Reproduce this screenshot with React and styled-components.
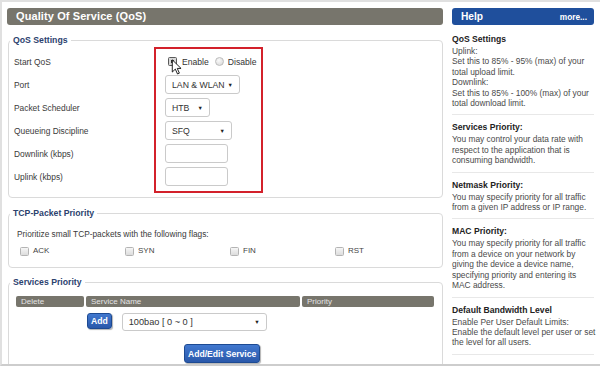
import React from 'react'
import styled, { createGlobalStyle } from 'styled-components'

const GlobalStyle = createGlobalStyle`
  html, body { margin: 0; padding: 0; background: #fff; }
  body { font-family: "Liberation Sans", Arial, sans-serif; }
`

const Page = styled.div`
  box-sizing: border-box;
  width: 600px;
  height: 366px;
  overflow: hidden;
  border: 2px solid #e0e0e0;
  border-right: none;
  border-bottom-color: #cdcdcd;
  padding: 6px 0 0 5px;
  display: grid;
  grid-template-columns: 436px 142px;
  column-gap: 9px;
  align-items: start;
`

const Main = styled.div`
  display: flex;
  flex-direction: column;
`

const TitleBar = styled.div`
  height: 17px;
  border-radius: 3px;
  background: #77756c;
  color: #fff;
  font-weight: bold;
  font-size: 11px;
  line-height: 17px;
  padding-left: 9px;
  letter-spacing: 0.1px;
`

const Fieldset = styled.fieldset`
  margin: ${p => p.$top}px 0 0 1px;
  padding: 0;
  border: 1px solid #dadada;
  border-radius: 4px;
  min-width: 0;
`

const Legend = styled.legend`
  font-size: 8.7px;
  font-weight: bold;
  color: #2c426e;
  line-height: 11px;
  padding: 0 3px;
  margin-left: 1px;
`

const QosBody = styled.div`
  display: flex;
  padding: 1px 0 4px 5px;
`

const LabelCol = styled.div`
  width: 140px;
  padding-top: 3px;
`

const Row = styled.div`
  position: relative;
  display: flex;
  align-items: center;
  height: 23px;
`

const Label = styled.span`
  font-size: 8.4px;
  color: #3a3a3a;
`

const ControlBox = styled.div`
  box-sizing: content-box;
  width: 96px;
  border: 2px solid #d3212b;
  padding: 1px 0 3px 9px;
`

const Check = styled.span`
  box-sizing: border-box;
  display: inline-block;
  flex: none;
  width: 9px;
  height: 9px;
  border: 1px solid ${p => (p.$active ? '#5a5a5a' : '#b4b4b4')};
  border-radius: 1.5px;
  background: ${p => (p.$active ? '#d8d8d8' : 'linear-gradient(#f6f6f6, #dcdcdc)')};
  position: relative;

  &::after {
    content: '';
    display: ${p => (p.$active ? 'block' : 'none')};
    position: absolute;
    left: 2px;
    top: 2px;
    width: 3px;
    height: 3px;
    background: #333;
  }
`

const Radio = styled.span`
  box-sizing: border-box;
  display: inline-block;
  flex: none;
  width: 9px;
  height: 9px;
  border: 1px solid #bdbdbd;
  border-radius: 50%;
  background: radial-gradient(circle at 40% 35%, #fafafa, #d4d4d4);
`

const OptText = styled.span`
  font-size: 8.6px;
  color: #333;
  margin-left: ${p => p.$gap || 0}px;
`

const SelectBox = styled.div`
  box-sizing: border-box;
  width: ${p => p.$w}px;
  height: ${p => p.$h || 19}px;
  border: 1px solid #cacaca;
  border-radius: 3px;
  background: #fff;
  display: flex;
  align-items: center;
  justify-content: space-between;
  padding: 0 6px 0 6px;
  font-size: ${p => p.$fs || 8.7}px;
  color: #333;
  white-space: nowrap;

  &::after {
    content: '▼';
    font-size: 5.5px;
    color: #222;
  }
`

const TextInput = styled.div`
  box-sizing: border-box;
  width: 63px;
  height: 19px;
  border: 1px solid #cacaca;
  border-radius: 3px;
  background: #fff;
`

const Cursor = styled.svg`
  position: absolute;
  left: 6px;
  top: 9px;
  width: 11px;
  height: 16px;
`

const TcpBody = styled.div`
  padding: 9px 8px 10px 8px;
  font-size: 8.3px;
  color: #3a3a3a;
  line-height: 12px;
`

const FlagGrid = styled.div`
  display: grid;
  grid-template-columns: repeat(4, 105px);
  margin-top: 5px;
  padding-left: 3px;
`

const Flag = styled.label`
  display: flex;
  align-items: center;
  gap: 4px;
  font-size: 8px;
  color: #444;
`

const ServicesBody = styled.div`
  padding: 8px 0 20px 7px;
`

const TableHead = styled.div`
  display: grid;
  grid-template-columns: 68px 214px 132px;
  column-gap: 2px;
`

const HeadCell = styled.div`
  height: 11px;
  background: #77756c;
  border-radius: 2px;
  color: #e4e4e4;
  font-size: 8px;
  line-height: 11px;
  padding-left: 5px;
`

const AddRow = styled.div`
  display: flex;
  align-items: flex-start;
  gap: 10px;
  margin-top: 6px;
  padding-left: 71px;
`

const BlueButton = styled.div`
  box-sizing: border-box;
  height: ${p => p.$h}px;
  padding: 0 ${p => p.$px}px;
  border: 1px solid #1d4a92;
  border-radius: 3px;
  background: linear-gradient(#4178cf, #2a58aa);
  box-shadow: 1px 1px 1px rgba(0, 0, 0, 0.3);
  color: #fff;
  font-weight: bold;
  font-size: 8.6px;
  display: flex;
  align-items: center;
  white-space: nowrap;
`

const EditRow = styled.div`
  margin-top: 13px;
  padding-left: 168px;
  display: flex;
`

const Help = styled.div`
  display: flex;
  flex-direction: column;
`

const HelpBar = styled.div`
  height: 17px;
  border-radius: 3px;
  background: #1f4f9c;
  color: #fff;
  font-weight: bold;
  display: flex;
  align-items: center;
  justify-content: space-between;
  padding: 0 7px 0 9px;
`

const HelpTitle = styled.span`
  font-size: 10.2px;
`

const More = styled.span`
  font-size: 8.3px;
`

const HelpSection = styled.div`
  padding: ${p => (p.$first ? 8 : 6)}px 0 6px;
  border-bottom: 1px solid #e8e8e8;
`

const HelpHeading = styled.div`
  font-size: 8.6px;
  font-weight: bold;
  color: #222;
  line-height: 12px;
  margin-bottom: 1px;
`

const HelpLine = styled.div`
  font-size: 8.4px;
  color: #4a4a4a;
  line-height: 10.4px;
  white-space: nowrap;
`

const helpItems = [
  {
    title: 'QoS Settings',
    lines: [
      'Uplink:',
      'Set this to 85% - 95% (max) of your',
      'total upload limit.',
      'Downlink:',
      'Set this to 85% - 100% (max) of your',
      'total download limit.',
    ],
  },
  {
    title: 'Services Priority:',
    lines: [
      'You may control your data rate with',
      'respect to the application that is',
      'consuming bandwidth.',
    ],
  },
  {
    title: 'Netmask Priority:',
    lines: [
      'You may specify priority for all traffic',
      'from a given IP address or IP range.',
    ],
  },
  {
    title: 'MAC Priority:',
    lines: [
      'You may specify priority for all traffic',
      'from a device on your network by',
      'giving the device a device name,',
      'specifying priority and entering its',
      'MAC address.',
    ],
  },
  {
    title: 'Default Bandwidth Level',
    lines: [
      'Enable Per User Default Limits:',
      'Enable the default level per user or set',
      'the level for all users.',
    ],
  },
]

const labels = [
  'Start QoS',
  'Port',
  'Packet Scheduler',
  'Queueing Discipline',
  'Downlink (kbps)',
  'Uplink (kbps)',
]

const flags = ['ACK', 'SYN', 'FIN', 'RST']

export default function App() {
  return (
    <>
      <GlobalStyle />
      <Page>
        <Main>
          <TitleBar>Quality Of Service (QoS)</TitleBar>

          <Fieldset $top={10}>
            <Legend>QoS Settings</Legend>
            <QosBody>
              <LabelCol>
                {labels.map(l => (
                  <Row key={l}>
                    <Label>{l}</Label>
                  </Row>
                ))}
              </LabelCol>
              <ControlBox>
                <Row>
                  <Check $active style={{ marginLeft: 3 }} />
                  <OptText $gap={5}>Enable</OptText>
                  <Radio style={{ marginLeft: 6 }} />
                  <OptText $gap={4}>Disable</OptText>
                  <Cursor viewBox="0 0 12 19">
                    <path
                      d="M1 1 L1 15.5 L4.6 12 L7.2 17.8 L9.4 16.8 L6.9 11.2 L11.4 11.2 Z"
                      fill="#fff"
                      stroke="#111"
                      strokeWidth="1.1"
                      strokeLinejoin="round"
                    />
                  </Cursor>
                </Row>
                <Row>
                  <SelectBox $w={75}>LAN &amp; WLAN</SelectBox>
                </Row>
                <Row>
                  <SelectBox $w={45}>HTB</SelectBox>
                </Row>
                <Row>
                  <SelectBox $w={67}>SFQ</SelectBox>
                </Row>
                <Row>
                  <TextInput />
                </Row>
                <Row>
                  <TextInput />
                </Row>
              </ControlBox>
            </QosBody>
          </Fieldset>

          <Fieldset $top={10}>
            <Legend>TCP-Packet Priority</Legend>
            <TcpBody>
              Prioritize small TCP-packets with the following flags:
              <FlagGrid>
                {flags.map(f => (
                  <Flag key={f}>
                    <Check />
                    {f}
                  </Flag>
                ))}
              </FlagGrid>
            </TcpBody>
          </Fieldset>

          <Fieldset $top={9}>
            <Legend>Services Priority</Legend>
            <ServicesBody>
              <TableHead>
                <HeadCell>Delete</HeadCell>
                <HeadCell>Service Name</HeadCell>
                <HeadCell>Priority</HeadCell>
              </TableHead>
              <AddRow>
                <BlueButton $h={16} $px={3}>Add</BlueButton>
                <SelectBox $w={145} $h={18} $fs={9.2}>100bao [ 0 ~ 0 ]</SelectBox>
              </AddRow>
              <EditRow>
                <BlueButton $h={19} $px={3}>Add/Edit Service</BlueButton>
              </EditRow>
            </ServicesBody>
          </Fieldset>
        </Main>

        <Help>
          <HelpBar>
            <HelpTitle>Help</HelpTitle>
            <More>more...</More>
          </HelpBar>
          {helpItems.map((item, i) => (
            <HelpSection key={item.title} $first={i === 0}>
              <HelpHeading>{item.title}</HelpHeading>
              {item.lines.map(line => (
                <HelpLine key={line}>{line}</HelpLine>
              ))}
            </HelpSection>
          ))}
        </Help>
      </Page>
    </>
  )
}
